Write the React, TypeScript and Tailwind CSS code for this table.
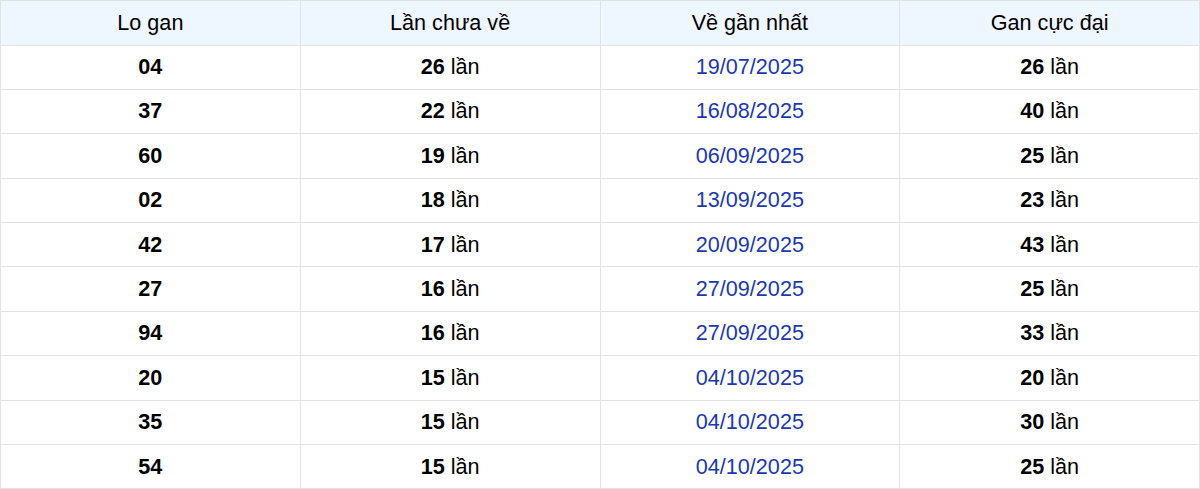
const rows = [
  ["04", "26", "19/07/2025", "26"],
  ["37", "22", "16/08/2025", "40"],
  ["60", "19", "06/09/2025", "25"],
  ["02", "18", "13/09/2025", "23"],
  ["42", "17", "20/09/2025", "43"],
  ["27", "16", "27/09/2025", "25"],
  ["94", "16", "27/09/2025", "33"],
  ["20", "15", "04/10/2025", "20"],
  ["35", "15", "04/10/2025", "30"],
  ["54", "15", "04/10/2025", "25"],
];

const headers = ["Lo gan", "Lần chưa về", "Về gần nhất", "Gan cực đại"];

export default function App() {
  return (
    <div className="w-[1200px] bg-white font-['Liberation_Sans',Arial,sans-serif] text-[21.6px] text-black">
      <table className="w-full table-fixed border-collapse">
        <thead>
          <tr className="h-[44.5px] bg-[#eef6ff]">
            {headers.map((h) => (
              <th key={h} className="border-[1.5px] border-[#e2e2e2] font-normal text-center">
                {h}
              </th>
            ))}
          </tr>
        </thead>
        <tbody>
          {rows.map(([lo, count, date, max], i) => (
            <tr key={i} className="h-[44.4px]">
              <td className="border-[1.5px] border-[#e2e2e2] text-center font-bold">{lo}</td>
              <td className="border-[1.5px] border-[#e2e2e2] text-center">
                <b>{count}</b> lần
              </td>
              <td className="border-[1.5px] border-[#e2e2e2] text-center text-[#1a38b0]">{date}</td>
              <td className="border-[1.5px] border-[#e2e2e2] text-center">
                <b>{max}</b> lần
              </td>
            </tr>
          ))}
        </tbody>
      </table>
    </div>
  );
}
